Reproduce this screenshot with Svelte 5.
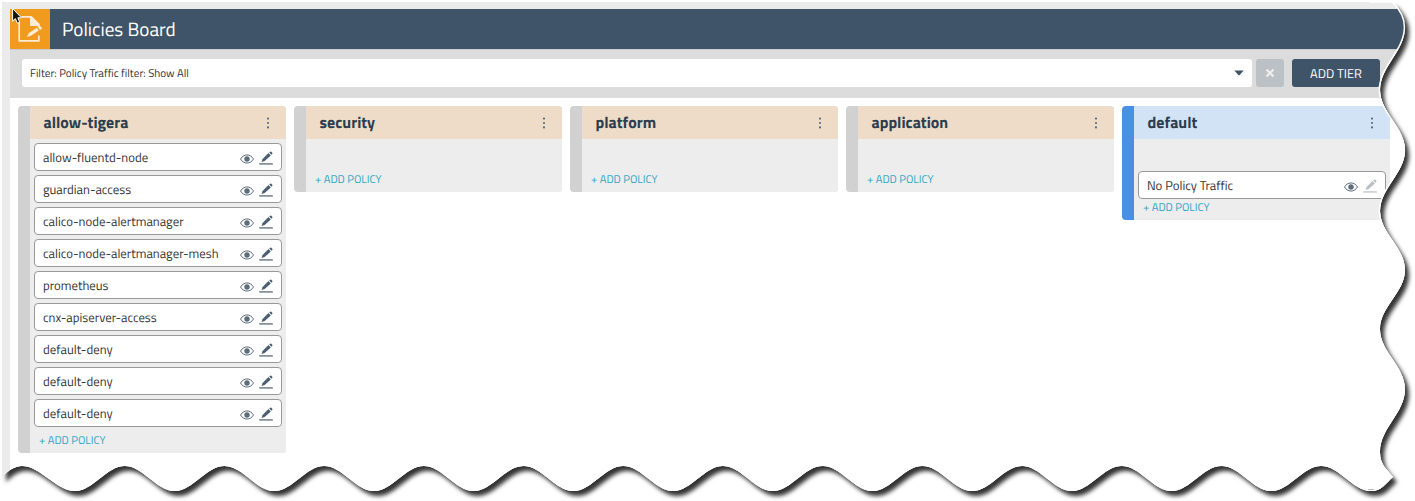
<script>
  const tiers = [
    {
      name: 'allow-tigera',
      policies: [
        'allow-fluentd-node', 'guardian-access', 'calico-node-alertmanager',
        'calico-node-alertmanager-mesh', 'prometheus', 'cnx-apiserver-access',
        'default-deny', 'default-deny', 'default-deny'
      ]
    },
    { name: 'security', policies: [] },
    { name: 'platform', policies: [] },
    { name: 'application', policies: [] },
    { name: 'default', policies: ['No Policy Traffic'], isDefault: true }
  ];

  // Outline of the sheet: a wavy right side followed by a wavy bottom.
  function outline() {
    let d = 'M2 2 H1393 C1401 10 1405 18 1405 27';
    const ys = [27, 90, 150, 211, 270, 329, 389, 452];
    for (let i = 1; i < ys.length; i++) {
      const from = i % 2 ? 1405 : 1380;
      const to = i % 2 ? 1380 : 1405;
      const k = (ys[i] - ys[i - 1]) * 0.38;
      d += ` C${from} ${ys[i - 1] + k} ${to} ${ys[i] - k} ${to} ${ys[i]}`;
    }
    d += ' C1380 465 1387 469 1393 477 C1386 483 1382 491 1371 491';
    let x = 1371;
    let low = true;
    for (let i = 0; i < 27; i++) {
      const step = i === 26 ? 53 : 49.85;
      const nx = i === 26 ? 22 : x - step;
      const y = low ? 491 : 466;
      const ny = low ? 466 : 491;
      d += ` C${x - 18.5} ${y} ${nx + 18.5} ${ny} ${nx} ${ny}`;
      x = nx;
      low = !low;
    }
    return d + ' C14 466 8 471 2 477 Z';
  }
  const edge = outline();
</script>

{#snippet eye()}
  <svg class="eye" width="14" height="10" viewBox="0 0 14 10">
    <path d="M.5 5C3.6-.4 10.4-.4 13.5 5 10.4 10.4 3.6 10.4.5 5Z" fill="none" stroke="currentColor" stroke-width="1" />
    <circle cx="7" cy="5" r="2.7" fill="currentColor" />
  </svg>
{/snippet}

{#snippet pencil(off)}
  <svg class="pencil" class:off width="14" height="14" viewBox="0 0 14 14">
    <path d="M2.6 10.9 3.5 7.9 9.5 2.1 11.8 4.4 5.6 10.1ZM10.2 1.5 11.2.7Q11.8.3 12.4.8L13.3 1.7Q13.8 2.3 13.2 2.9L12.4 3.7Z" fill="currentColor" />
    <path d="M.2 12.9H13.8" stroke="currentColor" stroke-width="1.5" opacity=".8" />
  </svg>
{/snippet}

<div class="stage">
  <svg class="layer" width="1415" height="501"><path class="shade" d={edge} /></svg>
  <div class="sheet" style:clip-path={`path('${edge}')`}>
    <header>
      <div class="badge">
        <svg width="40" height="40" viewBox="0 0 40 40" fill="none" stroke="#fdebd2">
          <path d="M12.5 7.9H22L29.6 15.3V18M29.8 26.5V31.8H10.2V13" stroke-width="1.7" />
          <path d="M21 7.1H22.6L30.5 15V17H21Z" fill="#fdebd2" stroke="none" />
          <path d="M18 28 19.6 24.3 27.9 18.8 29.8 21.6 21.6 27.1ZM29 18 30.3 17.1Q31.2 16.7 31.8 17.5L32.9 18.9Q33.2 19.8 32.4 20.3L30.9 21.1Z" fill="#fdebd2" stroke="none" />
        </svg>
      </div>
      <h1>Policies Board</h1>
    </header>
    <div class="toolbar">
      <div class="filter">
        <span>Filter: Policy Traffic filter: Show All</span>
        <svg width="10" height="6" viewBox="0 0 10 6"><path d="M.3.4H9.7L5.7 5Q5 5.7 4.3 5Z" fill="#3f5468" /></svg>
      </div>
      <button class="clear" aria-label="Clear">
        <svg width="10" height="10" viewBox="0 0 10 10"><path d="M1.5 1.5 8.5 8.5M8.5 1.5 1.5 8.5" stroke="#eceeef" stroke-width="2.2" /></svg>
      </button>
      <button class="add-tier"><span>ADD TIER</span></button>
    </div>
    <main>
      {#each tiers as tier}
        <section class:blue={tier.isDefault}>
          <div class="body">
            <div class="head">
              <h2>{tier.name}</h2>
              <svg width="4" height="12" viewBox="0 0 4 12" fill="#5b6b7b"><circle cx="2" cy="1.6" r="1.1" /><circle cx="2" cy="6" r="1.1" /><circle cx="2" cy="10.4" r="1.1" /></svg>
            </div>
            <div class="list" class:empty={!tier.policies.length}>
              {#each tier.policies as policy}
                <div class="policy">
                  <span>{policy}</span>
                  {@render eye()}
                  {@render pencil(tier.isDefault)}
                </div>
              {/each}
            </div>
            <div class="add"><span>+ ADD POLICY</span></div>
          </div>
        </section>
      {/each}
    </main>
  </div>
  <svg class="layer" width="1415" height="501">
    <defs><clipPath id="top-part"><rect x="1370" y="0" width="45" height="260" /></clipPath></defs>
    <path d={edge} transform="translate(-.6 0)" clip-path="url(#top-part)" fill="none" stroke="#fff" stroke-width="1.5" />
    <path d="M1368 489.5H1374" stroke="#aaa" stroke-width=".8" />
  </svg>
  <svg class="layer" width="24" height="26" viewBox="0 0 24 26">
    <path d="M12.6 8.5V21.2L15.4 18.6 17.4 23.2 19.7 22.2 17.8 17.8H21.4Z" fill="#111" stroke="#fff" stroke-width="1" />
  </svg>
</div>

<style>
  :global(body) { background: #fff; overflow: hidden; }
  .stage { position: relative; width: 1415px; height: 501px; font-family: 'Titillium Web', Roboto, sans-serif; color: #333; overflow: hidden; text-rendering: geometricPrecision; }
  .layer { position: absolute; left: 0; top: 0; pointer-events: none; }
  .shade { fill: #fff; filter: drop-shadow(4px 5px 2px rgba(0, 0, 0, .8)); }
  .sheet { position: relative; box-sizing: border-box; width: 1415px; height: 501px; padding: 9px 0 0 10px; background: #ebebeb; }
  header { display: flex; align-items: center; height: 40px; background: #3f5468; border-bottom: 1px solid #c9cdd0; }
  .badge { width: 40px; height: 40px; background: #f09a1e; }
  .badge svg { display: block; transform: translateX(-1px); }
  h1 { margin: 0 0 0 12px; font-weight: 400; font-size: 19.2px; color: #fff; }
  .toolbar { box-sizing: border-box; height: 48px; display: flex; padding: 9px 0 0 12px; background: #dcdcdc; }
  .filter { box-sizing: border-box; width: 1230px; height: 28px; display: flex; align-items: center; justify-content: space-between; padding: 0 8px; border-radius: 3px; background: #fff; font-size: 11.2px; }
  button { box-sizing: border-box; height: 28px; padding: 0; border: 0; border-radius: 3px; font-family: inherit; display: flex; align-items: center; justify-content: center; text-rendering: geometricPrecision; }
  .clear { width: 28px; margin-left: 4px; background: #bcc1c5; }
  .add-tier { width: 88px; margin-left: 8px; background: #3f5468; color: #fff; font-size: 12.8px; }
  main { display: flex; align-items: flex-start; gap: 8px; height: 403px; box-sizing: border-box; padding: 8px; background: #fff; }
  section { flex: none; box-sizing: border-box; width: 268px; padding-left: 12px; border-radius: 4px; background: #d1d1d1; overflow: hidden; }
  .blue { background: #4a90e2; border-radius: 4px 0 0 4px; }
  .body { background: #ededed; }
  .head { box-sizing: border-box; height: 33px; display: flex; align-items: center; justify-content: space-between; padding: 0 16px 0 13.5px; background: #eedcc8; }
  .blue .head { background: #d2e3f6; }
  h2 { margin: 0; font-size: 16px; line-height: 24px; padding-top: 1px; font-weight: 700; color: #2d3e50; }
  .list { display: flex; flex-direction: column; gap: 4px; padding: 4px 4px 0; }
  .blue .list { padding-top: 32px; }
  .empty { padding-top: 28px; }
  .policy { box-sizing: border-box; height: 28px; display: flex; align-items: center; padding: 0 8px; border: 1px solid #999; border-radius: 4px; background: #fff; font-size: 12.8px; }
  .policy span { flex: 1; }
  .eye { color: #5b6d7e; margin: 3px 5px 0 0; }
  .pencil { color: #4b5e70; margin-top: 2px; }
  .off { color: #b9bfc4; }
  .add { height: 25px; padding-left: 9px; font-size: 11.2px; line-height: 26px; color: #2fa6c6; }
  section:first-child .add { height: 26px; line-height: 28px; }
  .blue .add { height: 21px; line-height: 18px; }
</style>
